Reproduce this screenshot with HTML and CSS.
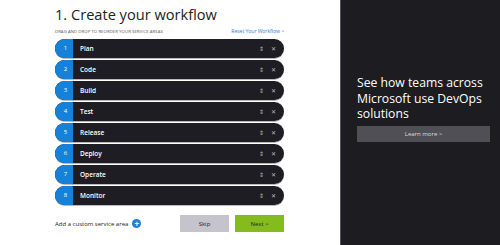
FILE: index.html
```html
<!doctype html>
<html>
<head>
<meta charset="utf-8">
<title>Create your workflow</title>
	<link rel="stylesheet" href="styles.css">
</head>

<body>
	<div class="page">
		<div class="main">
			<h1 class="title">1. Create your workflow</h1>

			<div class="subhead">
				<span class="hint">DRAG AND DROP TO REORDER YOUR SERVICE AREAS</span>
				<a class="reset" href="#">Reset Your Workflow &gt;</a>
			</div>

			<ul class="steps">
				<li class="step"><span class="num">1</span><span class="name">Plan</span><span class="move">&#8661;</span><span class="del">&#10005;</span></li>
				<li class="step"><span class="num">2</span><span class="name">Code</span><span class="move">&#8661;</span><span class="del">&#10005;</span></li>
				<li class="step"><span class="num">3</span><span class="name">Build</span><span class="move">&#8661;</span><span class="del">&#10005;</span></li>
				<li class="step"><span class="num">4</span><span class="name">Test</span><span class="move">&#8661;</span><span class="del">&#10005;</span></li>
				<li class="step"><span class="num">5</span><span class="name">Release</span><span class="move">&#8661;</span><span class="del">&#10005;</span></li>
				<li class="step"><span class="num">6</span><span class="name">Deploy</span><span class="move">&#8661;</span><span class="del">&#10005;</span></li>
				<li class="step"><span class="num">7</span><span class="name">Operate</span><span class="move">&#8661;</span><span class="del">&#10005;</span></li>
				<li class="step"><span class="num">8</span><span class="name">Monitor</span><span class="move">&#8661;</span><span class="del">&#10005;</span></li>
			</ul>

			<div class="footer">
				<div class="custom">
					<span>Add a custom service area</span>
					<span class="plus">+</span>
				</div>
				<div class="actions">
					<button type="button" class="btn skip">Skip</button>
					<button type="button" class="btn next">Next &gt;</button>
				</div>
			</div>
		</div>

		<div class="side">
			<p class="pitch">See how teams across Microsoft use DevOps solutions</p>
			<button type="button" class="learn">Learn more &gt;</button>
		</div>
	</div>
</body>
</html>
```

FILE: styles.css
```css
*{padding: 0;margin: 0;box-sizing: border-box;}
body{font-family: "Open Sans", "Noto Sans", sans-serif;background-color: #fff;}

.page{
	display: flex;
	width: 500px;
	height: 245px;}

.main{
	width: 340px;
	padding: 4px 56px 0 55px;}

.title{
	font-size: 14.6px;
	font-weight: normal;
	line-height: 20px;
	color: #222;}

.subhead{
	display: flex;
	justify-content: space-between;
	align-items: center;
	margin-top: 2px;
	height: 10px;}
.hint{
	font-size: 4.3px;
	color: #555;
	letter-spacing: 0.05px;}
.reset{
	font-size: 5px;
	color: #2b7cd3;
	text-decoration: none;}

.steps{
	list-style: none;
	margin-top: 3px;}
.step{
	display: flex;
	align-items: center;
	height: 19px;
	margin-bottom: 2px;
	border-radius: 10px;
	background-color: #1e1d23;
	box-shadow: 0 1px 0 #b9b9bd;
	overflow: hidden;
	color: #fff;}
.num{
	width: 18px;
	height: 19px;
	line-height: 19px;
	padding-left: 3px;
	text-align: center;
	background-color: #1681d8;
	font-size: 6px;}
.name{
	flex: 1;
	padding-left: 7px;
	font-size: 6.5px;
	font-weight: 600;}
.move{
	font-size: 6px;
	color: #bbb;
	margin-right: 7px;}
.del{
	font-size: 6px;
	color: #bbb;
	margin-right: 8px;}

.footer{
	display: flex;
	justify-content: space-between;
	align-items: center;
	margin-top: 10px;}
.custom{
	display: flex;
	align-items: center;
	font-size: 6px;
	color: #222;}
.plus{
	display: inline-block;
	width: 9px;
	height: 9px;
	margin-left: 4px;
	border-radius: 50%;
	background-color: #1a7fd6;
	color: #fff;
	font-size: 8px;
	line-height: 9px;
	text-align: center;
	font-weight: bold;}
.actions{display: flex;gap: 6px;}
.btn{
	width: 49px;
	height: 17px;
	border: none;
	font-family: "Open Sans", "Noto Sans", sans-serif;
	font-size: 6px;
	color: #222;}
.skip{background-color: #c5c4cc;}
.next{background-color: #84bc1e;}

.side{
	width: 160px;
	background-color: #1d1c21;
	border-left: 1px solid #55545a;
	padding: 75px 10px 0 16px;}
.pitch{
	font-size: 12.2px;
	line-height: 15.5px;
	color: #fff;}
.learn{
	display: block;
	width: 133px;
	height: 16px;
	margin-top: 4px;
	border: none;
	background-color: #504f56;
	color: #ddd;
	font-family: "Open Sans", "Noto Sans", sans-serif;
	font-size: 6px;}
```
